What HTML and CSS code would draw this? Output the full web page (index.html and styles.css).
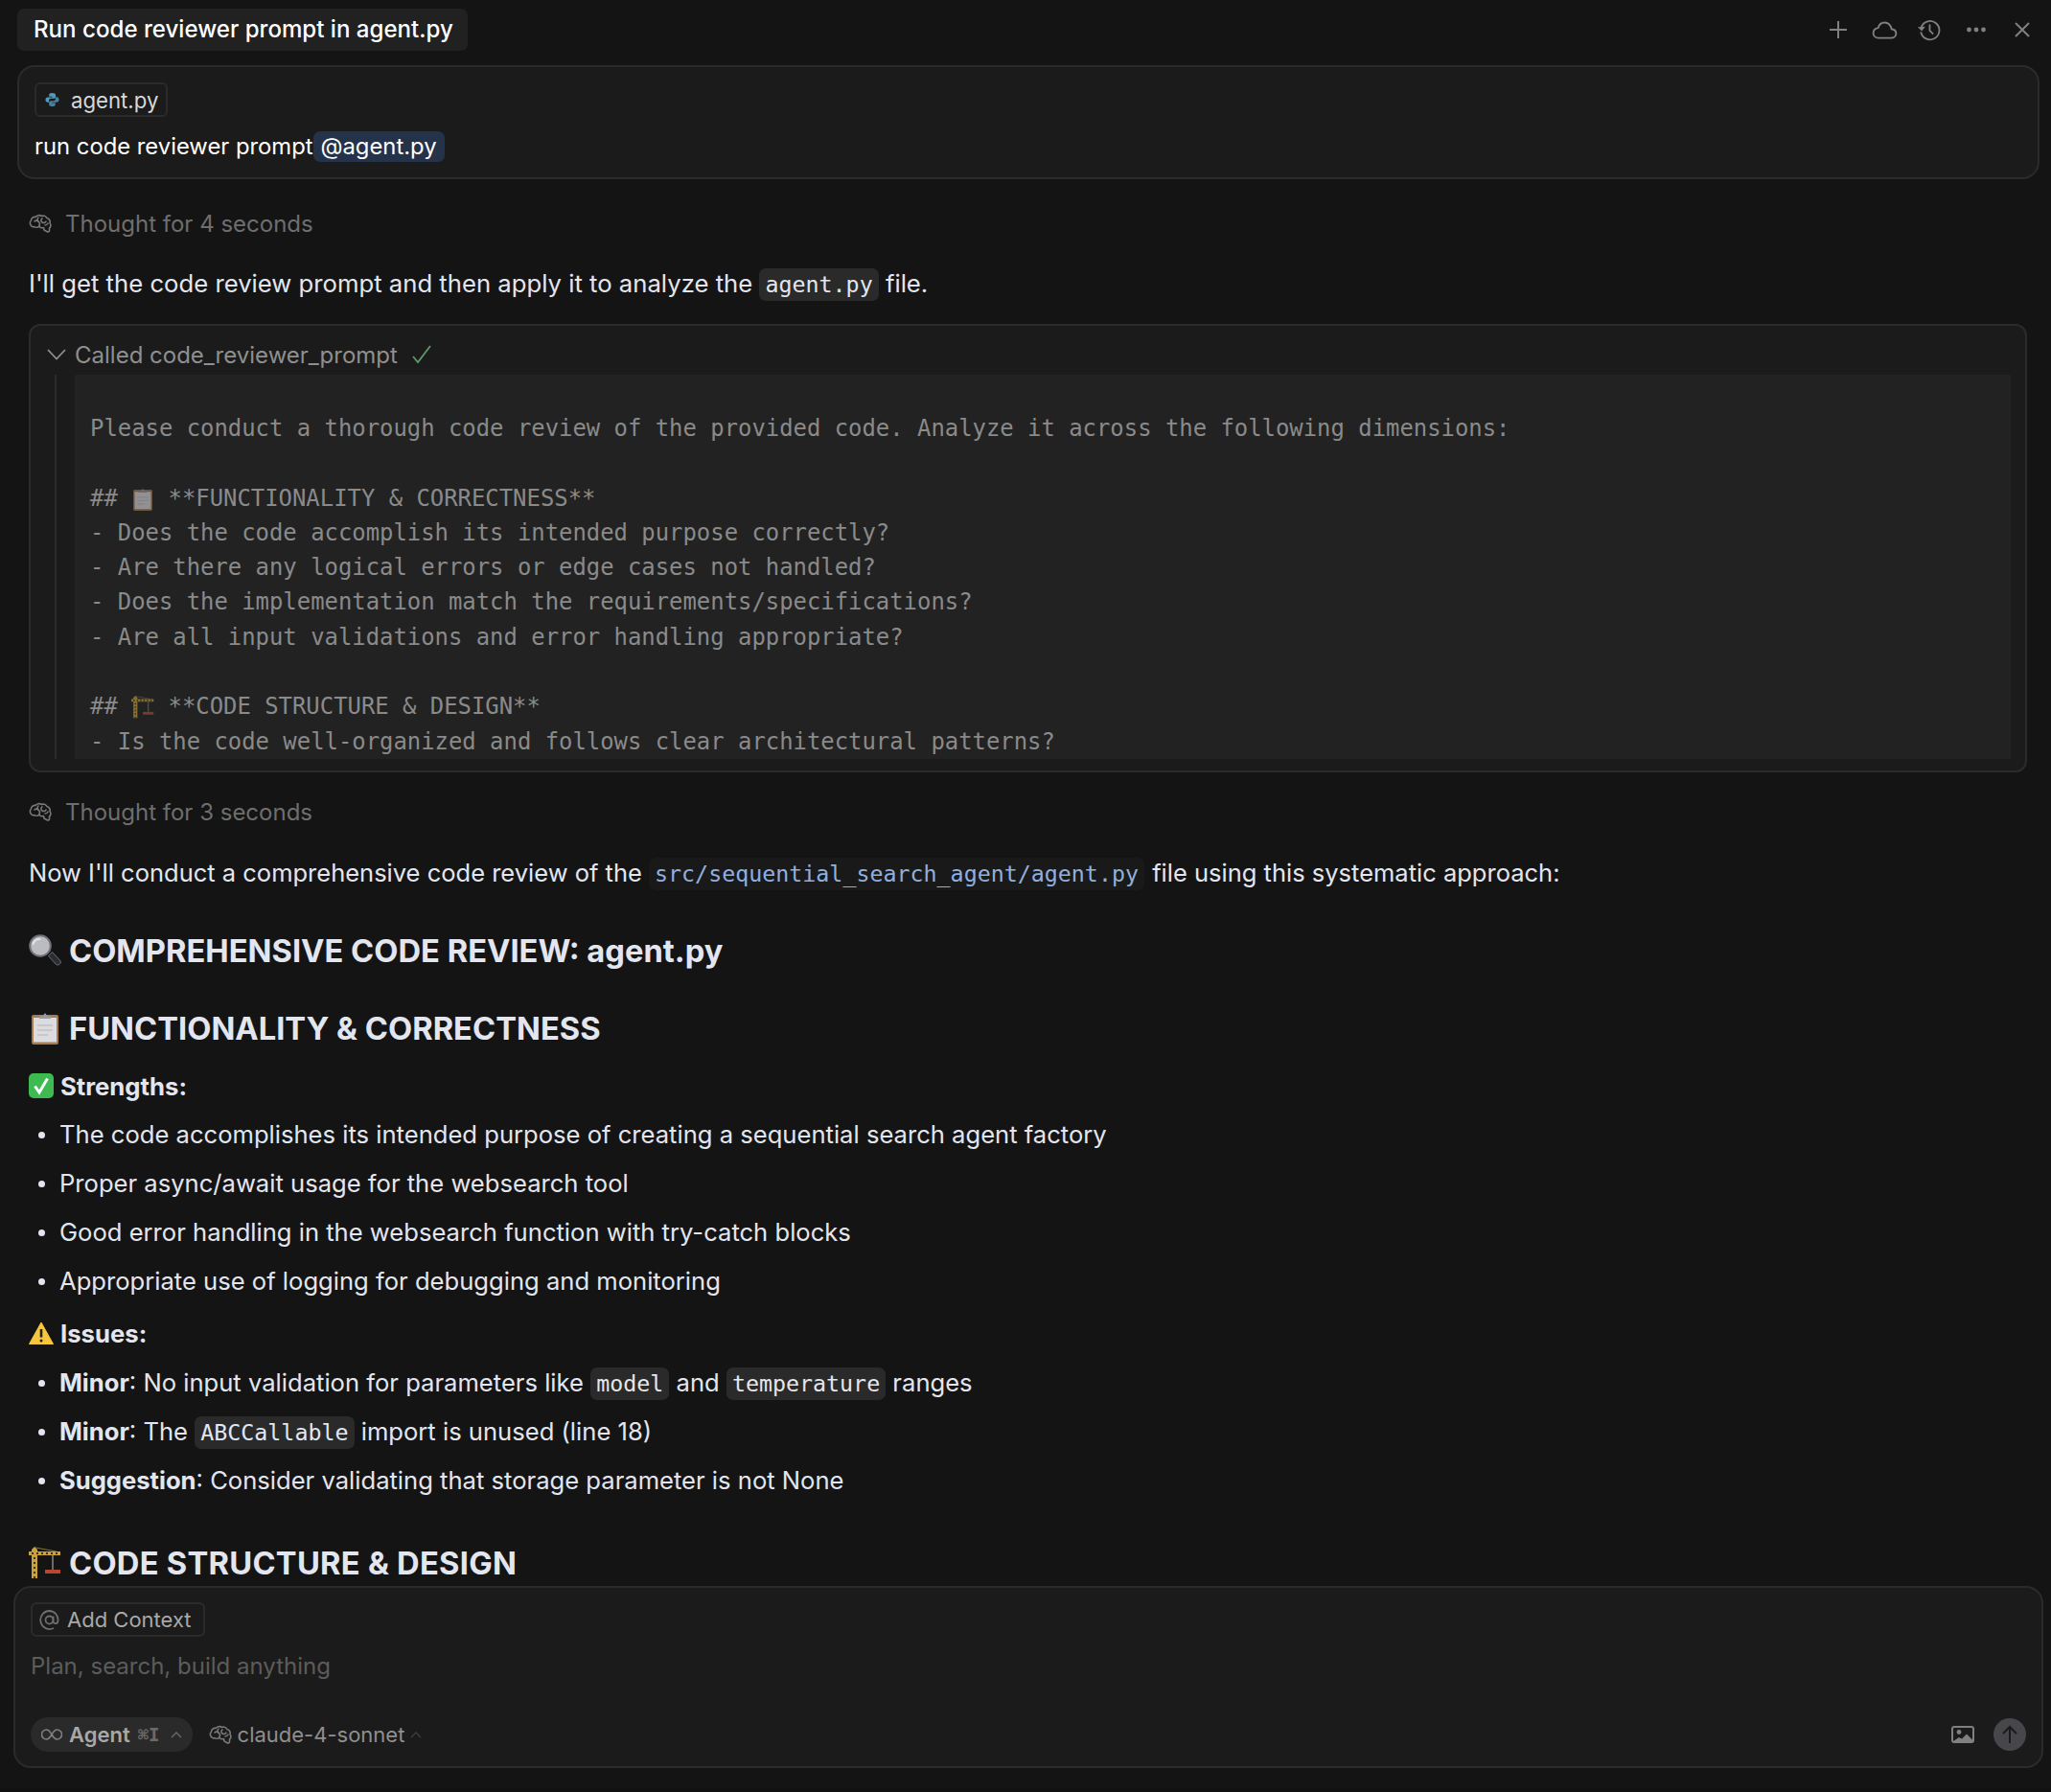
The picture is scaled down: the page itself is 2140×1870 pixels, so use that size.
FILE: index.html
```html
<!DOCTYPE HTML>
<html>

<head>
    <title>Run code reviewer prompt in agent.py</title>
    <meta name="viewport" content="width=device-width, initial-scale=1">
    <link rel="stylesheet" href="styles.css">
</head>

<body>
    <svg class="sprite" xmlns="http://www.w3.org/2000/svg">
        <symbol id="brain" viewBox="0 0 24 20">
            <path d="M3 13C1 11.500.8 8.500 2.500 7 2.500 4.500 5 3 7 3.500 8.500 1.500 11.500 1 13.500 2.500 15.500 1.500 18 2.500 18.800 4.500 21.200 5 22.800 7.500 22 10c1.500 1.500 1 4-.5 5v2.500c0 1.300-1.300 1.800-2.300 1.200L16 17l-.5-2.500c-1.700.5-3.500 0-4.500-1.300-1.500 1.400-4 1.400-5.200.3-.8.5-2 .2-2.800-.5z" fill="none" stroke="currentColor" stroke-width="1.600" stroke-linejoin="round"/>
            <path d="M6 8c1.500-1.500 3.500-1 4 .5M10 4c-1.500 1.500-1 3.500.5 4.500 1.200 1 1.200 2.500.5 4M14 5c-1.500 1-1.500 3 0 4 1.500 1 3.500.5 4-1M17 12c1.500 0 2.500-.8 3-2" fill="none" stroke="currentColor" stroke-width="1.600" stroke-linecap="round"/>
        </symbol>
        <symbol id="clipboard" viewBox="0 0 34 34">
            <rect x="3" y="3" width="28" height="31" rx="2" fill="#a67c4e"/>
            <rect x="5" y="6" width="24" height="25.500" fill="#dcdcdf"/>
            <path d="M9 14h16M9 19h16M9 24h11" stroke="#c8c8cc" stroke-width="2"/>
            <path d="M11 7V4.500h3.500L17 1l2.500 3.500H23V7z" fill="#9a9aa0"/>
        </symbol>
        <symbol id="crane" viewBox="0 0 34 34">
            <path d="M3 33V3l3-3 3 3v30zM0 5h33v4H0z" fill="#c9a23c"/>
            <path d="M6 33V10M3 7h30" fill="none" stroke="#3d3214" stroke-width="2" stroke-dasharray="2 3"/>
            <path d="M7 1l22 4" stroke="#8a7330" stroke-width="1"/>
            <path d="M25 9v15" stroke="#6a6a6a" stroke-width="2"/>
            <rect x="17" y="24" width="16" height="4" fill="#b8472f"/>
        </symbol>
    </svg>

    <div class="topbar">
        <div class="tab">Run code reviewer prompt in agent.py</div>
        <div class="topicons">
            <svg class="icon-plus" width="18" height="18" viewBox="0 0 18 18"><path d="M9 0v18M0 9h18" fill="none" stroke="currentColor" stroke-width="2"/></svg>
            <svg class="icon-cloud" width="27" height="19" viewBox="0 0 28 20"><path d="M7 18.500h14c3 0 5.500-2 5.500-4.800 0-2.700-2-4.600-4.800-4.800C20.500 4.500 17.600 1.500 14 1.500c-3.600 0-6.300 2.600-7.200 6C3.500 8 1.500 10.500 1.500 13.300c0 3 2.300 5.200 5.500 5.200z" fill="none" stroke="currentColor" stroke-width="2" stroke-linejoin="round"/></svg>
            <svg class="icon-history" width="24" height="23" viewBox="0 0 26 24"><path d="M4 8.500A10.500 10.500 0 1 1 3.500 14" fill="none" stroke="currentColor" stroke-width="2"/><path d="M0 8.500l4.500 4.500L8.500 8z" fill="currentColor"/><path d="M13.500 5.500v7l4 4" fill="none" stroke="currentColor" stroke-width="2"/></svg>
            <svg class="icon-dots" width="20" height="6" viewBox="0 0 20 6"><circle cx="2.500" cy="3" r="2.400" fill="currentColor"/><circle cx="10" cy="3" r="2.400" fill="currentColor"/><circle cx="17.500" cy="3" r="2.400" fill="currentColor"/></svg>
            <svg class="icon-close" width="16" height="16" viewBox="0 0 16 16"><path d="M1 1l14 14M15 1L1 15" fill="none" stroke="currentColor" stroke-width="2"/></svg>
        </div>
    </div>

    <div class="chat">
        <div class="usermsg">
            <div class="filechip">
                <svg width="15" height="16" viewBox="0 0 16 16"><path d="M8 .5c-2.600 0-3.500 1-3.500 2.300V4.500H8.300v.7H3C1.500 5.200.5 6.300.5 8.100c0 1.800 1 2.900 2.300 2.900h1.500V9c0-1.300 1-2.300 2.400-2.300h3.300c1 0 1.800-.8 1.800-1.900V2.800C11.800 1.400 10.400.5 8 .5z" fill="#519aba"/><path d="M8 15.500c2.600 0 3.500-1 3.500-2.300v-1.700H7.700v-.7H13c1.500 0 2.500-1.100 2.500-2.900 0-1.800-1-2.900-2.300-2.900h-1.500V7c0 1.300-1 2.300-2.400 2.300H6.200c-1 0-1.800.8-1.800 1.900v2c0 1.400 1.400 2.300 3.600 2.300z" fill="#519aba" opacity=".8"/></svg>
                <span>agent.py</span>
            </div>
            <div class="usertext">run code reviewer prompt<span class="mention">@agent.py</span></div>
        </div>

        <div class="thought thought-first">
            <svg class="brain" width="24" height="20"><use href="#brain"/></svg>
            <span>Thought for 4 seconds</span>
        </div>

        <p class="para para-first">I'll get the code review prompt and then apply it to analyze the <code>agent.py</code> file.</p>

        <div class="toolcall">
            <div class="toolhead">
                <svg width="20" height="12" viewBox="0 0 20 12"><path d="M1 1l9 9.500L19 1" fill="none" stroke="currentColor" stroke-width="1.800"/></svg>
                <span>Called code_reviewer_prompt</span>
                <svg class="tick" width="20" height="20" viewBox="0 0 20 20"><path d="M1 12l5 6L19 1" fill="none" stroke="#5e9a67" stroke-width="1.800"/></svg>
            </div>
            <div class="toolbody">
                <div class="prompt">
                    <div class="promptline">Please conduct a thorough code review of the provided code. Analyze it across the following dimensions:</div>
                    <div class="promptline"></div>
                    <div class="promptline"><span>## </span><svg class="code-emoji" width="24" height="24"><use href="#clipboard"/></svg><span> **FUNCTIONALITY &amp; CORRECTNESS**</span></div>
                    <div class="promptline">- Does the code accomplish its intended purpose correctly?</div>
                    <div class="promptline">- Are there any logical errors or edge cases not handled?</div>
                    <div class="promptline">- Does the implementation match the requirements/specifications?</div>
                    <div class="promptline">- Are all input validations and error handling appropriate?</div>
                    <div class="promptline"></div>
                    <div class="promptline"><span>## </span><svg class="code-emoji" width="24" height="24"><use href="#crane"/></svg><span> **CODE STRUCTURE &amp; DESIGN**</span></div>
                    <div class="promptline">- Is the code well-organized and follows clear architectural patterns?</div>
                </div>
            </div>
        </div>

        <div class="thought thought-second">
            <svg class="brain" width="24" height="20"><use href="#brain"/></svg>
            <span>Thought for 3 seconds</span>
        </div>

        <p class="para para-second">Now I'll conduct a comprehensive code review of the <code class="path">src/sequential_search_agent/agent.py</code> file using this systematic approach:</p>

        <h2 class="title-review">
            <svg class="emoji" width="34" height="34" viewBox="0 0 34 34">
                <path d="M20.500 22.500l2-2 2-2 8 8.500c1.200 1.300 1.100 3-.2 4.200-1.300 1.200-3 1-4.200-.2z" fill="#2b2d33" stroke="#6a6d74" stroke-width="1"/>
                <circle cx="12" cy="12" r="11.800" fill="#6f7279"/>
                <circle cx="12" cy="12" r="9.800" fill="#bcbcc0"/>
                <path d="M4.500 10c1-3 3.500-5 7-5" fill="none" stroke="#e2e3e6" stroke-width="2" stroke-linecap="round"/>
            </svg>
            COMPREHENSIVE CODE REVIEW: agent.py
        </h2>
        <h2 class="title-func">
            <svg class="emoji" width="34" height="34"><use href="#clipboard"/></svg>
            FUNCTIONALITY &amp; CORRECTNESS
        </h2>

        <div class="label label-strengths">
            <svg class="emoji-small" width="26" height="26" viewBox="0 0 26 26"><rect width="26" height="26" rx="5" fill="#3dbb50"/><path d="M6.500 13.500l4.500 6.500L19.500 5.500" fill="none" stroke="#fff" stroke-width="3"/></svg>
            <b>Strengths:</b>
        </div>
        <ul class="points">
            <li>The code accomplishes its intended purpose of creating a sequential search agent factory</li>
            <li>Proper async/await usage for the websearch tool</li>
            <li>Good error handling in the websearch function with try-catch blocks</li>
            <li>Appropriate use of logging for debugging and monitoring</li>
        </ul>

        <div class="label label-issues">
            <svg class="emoji-small" width="26" height="24" viewBox="0 0 26 24"><path d="M13 1L25.500 23.500H.5z" fill="#f6c63f" stroke="#f6c63f" stroke-width="1" stroke-linejoin="round"/><path d="M13 8v8.500" stroke="#222" stroke-width="2.600"/><circle cx="13" cy="20" r="1.500" fill="#222"/></svg>
            <b>Issues:</b>
        </div>
        <ul class="points points-issues">
            <li><b>Minor</b>: No input validation for parameters like <code>model</code> and <code>temperature</code> ranges</li>
            <li><b>Minor</b>: The <code>ABCCallable</code> import is unused (line 18)</li>
            <li><b>Suggestion</b>: Consider validating that storage parameter is not None</li>
        </ul>

        <h2 class="title-code">
            <svg class="emoji" width="34" height="34"><use href="#crane"/></svg>
            CODE STRUCTURE &amp; DESIGN
        </h2>
    </div>

    <div class="composer">
        <div class="contextchip">
            <svg width="21" height="21" viewBox="0 0 21 21"><circle cx="10.500" cy="10.500" r="4" fill="none" stroke="currentColor" stroke-width="1.800"/><path d="M14.500 6.500v5.500c0 3 4.500 3 5-.5.500-5.500-3.500-10.500-9-10.500a9.500 9.500 0 1 0 4.500 18" fill="none" stroke="currentColor" stroke-width="1.800"/></svg>
            <span>Add Context</span>
        </div>
        <div class="placeholder">Plan, search, build anything</div>
        <div class="composerbar">
            <div class="agentpill">
                <svg width="22" height="12" viewBox="0 0 22 12"><path d="M11 6C9 2.500 7.500 1 5.500 1a5 5 0 0 0 0 10c2 0 3.500-1.500 5.500-5zm0 0c2-3.500 3.500-5 5.500-5a5 5 0 0 1 0 10c-2 0-3.500-1.500-5.500-5z" fill="none" stroke="currentColor" stroke-width="1.600"/></svg>
                <b>Agent</b>
                <span class="shortcut">⌘I</span>
                <svg class="caret" width="12" height="7" viewBox="0 0 12 7"><path d="M1 6l5-5 5 5" fill="none" stroke="currentColor" stroke-width="1.400"/></svg>
            </div>
            <div class="modelpick">
                <svg class="brain" width="24" height="20"><use href="#brain"/></svg>
                <span>claude-4-sonnet</span>
                <svg class="caret caret-dim" width="12" height="7" viewBox="0 0 12 7"><path d="M1 6l5-5 5 5" fill="none" stroke="currentColor" stroke-width="1.400"/></svg>
            </div>
            <div class="composerright">
                <svg class="imageicon" width="24" height="18" viewBox="0 0 24 18"><rect x="1" y="1" width="22" height="16" rx="2" fill="none" stroke="currentColor" stroke-width="2"/><circle cx="8" cy="6.500" r="2.400" fill="currentColor"/><path d="M2 16l6-4 3 1.500 5-5 6 6v2.500H2z" fill="currentColor"/></svg>
                <div class="sendbutton">
                    <svg width="16" height="20" viewBox="0 0 16 20"><path d="M8 19V2M1 9l7-7 7 7" fill="none" stroke="#1b1b1d" stroke-width="2"/></svg>
                </div>
            </div>
        </div>
    </div>
</body>

</html>
```

FILE: styles.css
```css
html {
    font-family: Inter, "Noto Sans", sans-serif;
    font-size: 26px;
    color: #e3e6ef;
}

body {
    margin: 0;
    height: 100vh;
    display: flex;
    flex-direction: column;
    overflow: hidden;
    background-color: #141414;
    border-bottom: 4px solid #111111;
    box-sizing: border-box;
}

.sprite {
    display: none;
}

b {
    font-weight: 700;
}

/* top bar */
.topbar {
    flex: none;
    display: flex;
    justify-content: space-between;
    height: 59px;
    padding: 9px 22px 0 18px;
}

.tab {
    height: 44px;
    line-height: 44px;
    padding: 0 15px 0 17px;
    font-size: 24.100px;
    font-weight: 500;
    color: #ffffff;
    background-color: #212121;
    border-radius: 7px;
}

.topicons {
    display: flex;
    align-items: center;
    height: 44px;
    color: #808080;
}

.icon-cloud {
    margin-left: 26px;
}

.icon-history {
    margin-left: 21px;
}

.icon-dots {
    margin-left: 27px;
}

.icon-close {
    margin-left: 30px;
}

/* chat column */
.chat {
    flex: 1;
    min-height: 0;
    overflow: hidden;
    padding: 0 25px 0 30px;
}

.usermsg {
    height: 119px;
    margin: 0 -13px 0 -12px;
    padding: 16px 16px 0 16px;
    box-sizing: border-box;
    background-color: #1b1b1b;
    border: 2px solid #2b2b2b;
    border-radius: 18px;
}

.filechip {
    display: inline-flex;
    align-items: center;
    gap: 12px;
    height: 36px;
    padding: 0 8px 0 9px;
    box-sizing: border-box;
    font-size: 22.200px;
    color: #d8d8d8;
    border: 2px solid #2b2b2b;
    border-radius: 6px;
}

.usertext {
    height: 36px;
    margin-top: 13px;
    line-height: 36px;
    font-size: 23.800px;
    color: #ffffff;
}

.mention {
    display: inline-block;
    height: 32px;
    line-height: 32px;
    padding: 0 8px;
    background-color: #24334a;
    border-radius: 7px;
}

.thought {
    display: flex;
    align-items: center;
    gap: 14px;
    height: 36px;
    font-size: 24px;
    color: #6e6e6e;
}

.thought-first {
    margin-top: 28px;
}

.thought-second {
    margin-top: 23px;
}

.brain {
    flex: none;
    color: #787878;
}

.para {
    height: 40px;
    line-height: 40px;
    margin: 0;
    font-size: 25.700px;
}

.para-first {
    margin-top: 25px;
}

.para-second {
    margin-top: 26px;
    font-size: 25.500px;
}

code {
    display: inline-block;
    height: 34px;
    line-height: 34px;
    padding: 0 6px;
    font-family: "DejaVu Sans Mono", "Liberation Mono", monospace;
    font-size: 23.300px;
    background-color: #2a2a2a;
    border-radius: 7px;
}

.path {
    margin-right: 1px;
    color: #8fb0df;
    background-color: #191919;
}

/* tool call */
.toolcall {
    height: 468px;
    margin-top: 22px;
    box-sizing: border-box;
    background-color: #1b1b1b;
    border: 2px solid #2b2b2b;
    border-radius: 12px;
}

.toolhead {
    display: flex;
    align-items: center;
    height: 51px;
    padding: 9px 0 0 17px;
    box-sizing: border-box;
    font-size: 24px;
    color: #8f8f8f;
}

.toolhead span {
    margin-left: 9px;
}

.tick {
    margin-left: 15px;
}

.toolbody {
    height: 401px;
    margin-left: 25px;
    margin-right: 15px;
    padding-left: 19px;
    border-left: 2px solid #2b2b2b;
    overflow: hidden;
}

.prompt {
    height: 401px;
    padding: 38px 0 0 16px;
    box-sizing: border-box;
    overflow: hidden;
    font-family: "DejaVu Sans Mono", "Liberation Mono", monospace;
    font-size: 23.900px;
    line-height: 36.300px;
    color: #8a8a8a;
    background-color: #222222;
}

.promptline {
    height: 36.300px;
    white-space: pre;
}

.code-emoji {
    vertical-align: -5px;
    opacity: .6;
}

/* review text */
h2 {
    display: flex;
    align-items: center;
    gap: 8px;
    height: 50px;
    margin: 0;
    font-size: 32.700px;
    font-weight: 700;
}

.title-review {
    margin-top: 36px;
}

.title-func {
    margin-top: 31px;
}

.title-code {
    margin-top: 41px;
    letter-spacing: .25px;
}

.label {
    display: flex;
    align-items: center;
    gap: 7px;
    height: 40px;
    font-size: 25.700px;
}

.label-strengths {
    margin-top: 15px;
}

.label-issues {
    margin-top: 14px;
}

.points {
    list-style: none;
    margin: 0;
    padding: 0;
}

.points-issues {
    padding-top: 1px;
}

.points li {
    position: relative;
    height: 40px;
    margin-top: 11px;
    padding-left: 32px;
    line-height: 40px;
    font-size: 25.600px;
}

.points li::before {
    content: "";
    position: absolute;
    left: 10px;
    top: 17px;
    width: 7px;
    height: 7px;
    border-radius: 50%;
    background-color: #e3e6ef;
}

/* composer */
.composer {
    flex: none;
    height: 190px;
    margin: 0 8px 21px 14px;
    padding: 15px 16px 0 16px;
    box-sizing: border-box;
    background-color: #1b1b1b;
    border: 2px solid #2b2b2b;
    border-radius: 18px;
}

.contextchip {
    display: inline-flex;
    align-items: center;
    gap: 8px;
    height: 36px;
    padding: 0 12px 0 7px;
    box-sizing: border-box;
    font-size: 22px;
    color: #a8a8a8;
    border: 2px solid #2b2b2b;
    border-radius: 6px;
}

.contextchip svg {
    color: #6e6e6e;
}

.placeholder {
    height: 36px;
    margin-top: 13px;
    line-height: 36px;
    font-size: 24px;
    color: #5c5c5c;
}

.composerbar {
    display: flex;
    align-items: center;
    height: 36px;
    margin-top: 35px;
}

.agentpill {
    display: flex;
    align-items: center;
    height: 36px;
    padding: 0 11px 0 11px;
    font-size: 22px;
    color: #a8a8a8;
    background-color: #2a2a2a;
    border-radius: 18px;
}

.agentpill b {
    font-weight: 600;
}

.agentpill svg:first-child {
    color: #808080;
    margin-right: 7px;
}

.shortcut {
    margin-left: 8px;
    margin-right: 11px;
    font-family: "DejaVu Sans Mono", monospace;
    font-size: 19px;
    font-weight: 700;
    color: #6a6a6a;
}

.caret {
    color: #6a6a6a;
}

.caret-dim {
    color: #3e3e3e;
}

.modelpick {
    display: flex;
    align-items: center;
    gap: 6px;
    margin-left: 17px;
    font-size: 22px;
    color: #8f8f8f;
}

.composerright {
    display: flex;
    align-items: center;
    gap: 20px;
    margin-left: auto;
}

.imageicon {
    color: #808080;
}

.sendbutton {
    display: flex;
    align-items: center;
    justify-content: center;
    width: 34px;
    height: 34px;
    background-color: #47474b;
    border-radius: 50%;
}
```
